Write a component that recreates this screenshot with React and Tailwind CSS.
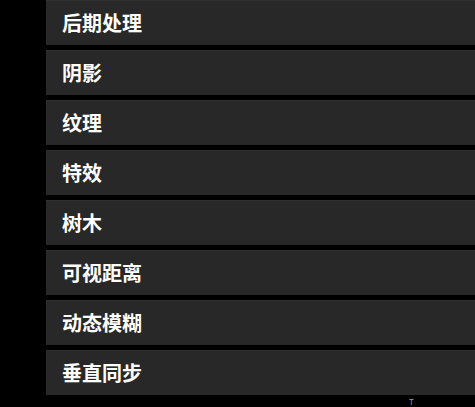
const ITEMS = ['后期处理', '阴影', '纹理', '特效', '树木', '可视距离', '动态模糊', '垂直同步']

export default function App() {
  return (
    <div className="relative w-[475px] h-[407px] overflow-hidden bg-black" style={{ fontFamily: '"Noto Sans CJK SC", "Noto Sans", sans-serif' }}>
      <div className="flex flex-col gap-[5px] pl-[46px]">
        {ITEMS.map(label => (
          <button
            key={label}
            className="h-[45px] w-full bg-[#282828] border-t border-[#303030] flex items-center pl-[16px] text-left text-white font-bold text-[20px] leading-none"
          >
            {label}
          </button>
        ))}
      </div>
      <span className="absolute left-[409px] top-[398px] text-[8px] leading-none text-[#9a9a9a]">T</span>
    </div>
  )
}
